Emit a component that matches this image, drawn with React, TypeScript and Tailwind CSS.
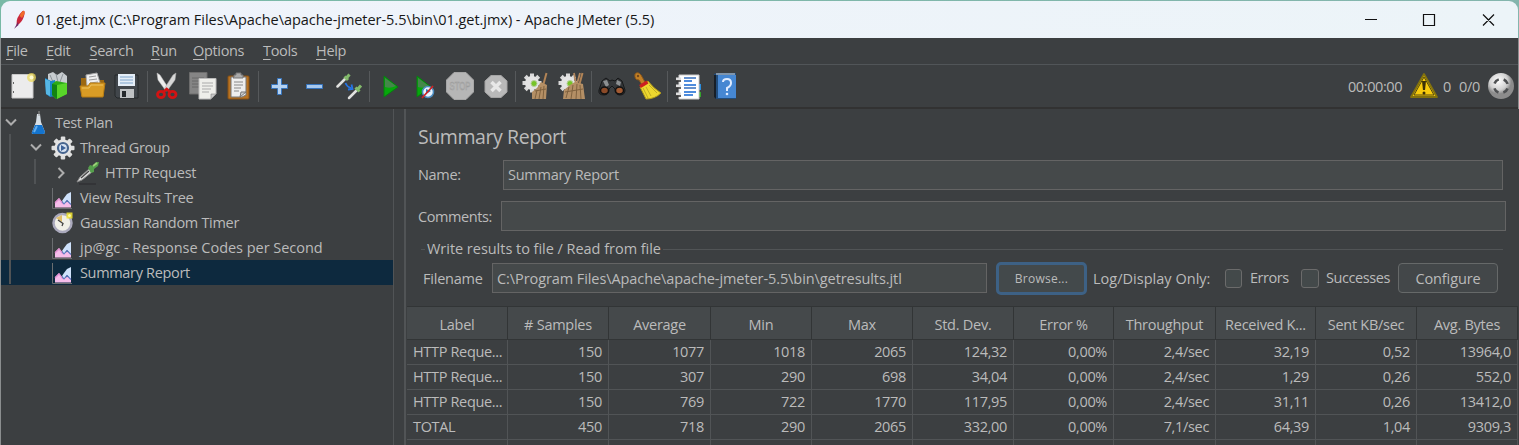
import React from "react";

const Feather = () => (
  <svg className="w-[12px] h-[20px]" viewBox="0 0 12 20">
    <path d="M2.500 15Q2 7 8.500 1Q11 0 10.500 4Q9.500 10 5 14Z" fill="#c9263c" />
    <path d="M5.500 6Q7 2 9 1Q11 0 10.500 4L8 8Z" fill="#f06a2a" />
    <path d="M0 19L4 12L4.500 15L1 18Z" fill="#6b2466" />
  </svg>
);
const Page = () => (
  <svg className="w-[28px] h-[28px]" viewBox="0 0 28 28">
    <path d="M3 2.500H24V26H3Z" fill="#ececec" stroke="#c8c8c8" />
    <path d="M4.500 10v2M4.500 19v2" stroke="#666" />
    <circle cx="22.500" cy="5.500" r="4.500" fill="#eedb5c" opacity=".75" />
    <circle cx="22.500" cy="5.500" r="2" fill="#fffbd0" />
  </svg>
);
const Templates = () => (
  <svg className="w-[28px] h-[28px]" viewBox="0 0 28 28">
    <path d="M5 2L10 0L14 3L19 0L24 4V12H5Z" fill="#c7cccf" />
    <path d="M7 3l3 7M13 2l2 8M20 2l-3 8" stroke="#8d959a" />
    <path d="M2 6L8 9L12 8V24L7 25L3 22Z" fill="#1b86c8" />
    <path d="M2 7L7 9V24L3 22Z" fill="#56b7e5" />
    <path d="M9 12L13 9L24 11V22L13 27L9 23Z" fill="#2cab16" />
    <path d="M14 13L24 11V22L14 27Z" fill="#58d529" />
    <path d="M9 12L14 13V27L9 23Z" fill="#138313" />
  </svg>
);
const Folder = () => (
  <svg className="w-[28px] h-[28px]" viewBox="0 0 28 28">
    <path d="M2 6H8L10 8H25V24H2Z" fill="#9c6811" />
    <path d="M7 3L18 1L22 14H8Z" fill="#efefef" stroke="#aaa" />
    <path d="M10 5l7-1M10 8l8-1M11 11l8-1" stroke="#999" />
    <path d="M1 14H9L11 11H26L24 25H3Z" fill="#d99c25" stroke="#b87d14" />
    <path d="M3 16H10L12 13H24" fill="none" stroke="#edc361" />
  </svg>
);
const Disk = () => (
  <svg className="w-[28px] h-[28px]" viewBox="0 0 28 28">
    <path d="M2 3H25V26H4L2 24Z" fill="#41464b" stroke="#24282b" />
    <path d="M5 2H22V14H5Z" fill="#e4edf6" />
    <path d="M7 5H20M7 8H20M7 11H20" stroke="#7fa5cc" />
    <path d="M7 17H21V26H7Z" fill="#bfc2c4" />
    <path d="M9 19H13V25H9Z" fill="#25292c" />
  </svg>
);
const Scissors = () => (
  <svg className="w-[28px] h-[28px]" viewBox="0 0 28 28">
    <path d="M4 1L7 3L16 17L13 19L5 8Z" fill="#ededed" stroke="#bbb" strokeWidth=".5" />
    <path d="M23 1L20 3L11 17L14 19L22 8Z" fill="#d7d7d7" stroke="#aaa" strokeWidth=".5" />
    <ellipse cx="8" cy="22.500" rx="3.500" ry="3.200" fill="none" stroke="#d31313" strokeWidth="2.800" />
    <ellipse cx="19.500" cy="22.500" rx="3.500" ry="3.200" fill="none" stroke="#d31313" strokeWidth="2.800" />
    <path d="M10.500 20L13.700 17L17 20" fill="none" stroke="#d31313" strokeWidth="2.500" />
  </svg>
);
const Copy = () => (
  <svg className="w-[28px] h-[28px]" viewBox="0 0 28 28">
    <path d="M0.500 .5H18V22H.5Z" fill="#858585" stroke="#6c6c6c" />
    <path d="M3 6H15M3 9H12M3 12H10M3 15H10" stroke="#696969" />
    <path d="M10 6.500H27V22L22 27H10Z" fill="#eeeeea" stroke="#bbb" />
    <path d="M13 11H24M13 14H24M13 17H22M13 20H20" stroke="#aaa" />
    <path d="M22 27V22H27Z" fill="#c7c7c7" stroke="#888" strokeWidth=".6" />
  </svg>
);
const Paste = () => (
  <svg className="w-[28px] h-[28px]" viewBox="0 0 28 28">
    <rect x="4" y="4" width="21" height="23" rx="1" fill="#b87322" stroke="#865015" />
    <path d="M7 5H22V23L18 25H7Z" fill="#eee" stroke="#777" />
    <path d="M10 5V3H12V1H17V3H19V6H9Z" fill="#aaa" stroke="#777" />
    <path d="M10 10H19M10 13H19M10 16H17M10 19H15" stroke="#888" />
    <path d="M16 25L17 20L22 20Z" fill="#ccc" stroke="#777" />
  </svg>
);
const Plus = () => (
  <svg className="w-[28px] h-[28px]" viewBox="0 0 28 28">
    <path d="M12.500 6.500H16.500V12.500H22.500V16.500H16.500V22.500H12.500V16.500H6.500V12.500H12.500Z" fill="#b5d2f2" stroke="#3674bd" />
  </svg>
);
const Minus = () => (
  <svg className="w-[28px] h-[28px]" viewBox="0 0 28 28">
    <path d="M6.500 12.500H22.500V16.500H6.500Z" fill="#a7c8ed" stroke="#3674bd" />
  </svg>
);
const Toggle = () => (
  <svg className="w-[28px] h-[28px]" viewBox="0 0 28 28">
    <path d="M1.500 14.500L9 7" stroke="#e1e1df" strokeWidth="2.500" strokeLinecap="round" />
    <path d="M8.500 4.500L12 8M10 6.500L13.500 2.500" stroke="#83ba6b" strokeWidth="3" />
    <path d="M13 26L20.500 18.500" stroke="#e1e1df" strokeWidth="2.500" strokeLinecap="round" />
    <path d="M19.500 15.500L23.500 19.500M21.500 17.500L25 13.500" stroke="#83ba6b" strokeWidth="3" />
    <path d="M9.500 11Q11 15 15 16M12 17.500L16.500 17L15.500 12.500" fill="none" stroke="#2574e5" strokeWidth="1.800" />
  </svg>
);
const Play = ({ blocked = false }: { blocked?: boolean }) => (
  <svg className="w-[28px] h-[28px]" viewBox="0 0 28 28">
    <path d="M6 4V25L20 15Z" fill="#06a80b" stroke="#087c12" />
    <path d="M7 6L18 14Q12 17 7 15Z" fill="#44874a" />
    {blocked && (
      <>
        <circle cx="17" cy="20" r="5.500" fill="#e9f4ff" stroke="#4b8bbf" strokeWidth="1.500" />
        <path d="M15 17V22L20 19Z" fill="#327fb9" />
        <path d="M11 26L22 14" stroke="#cf2424" strokeWidth="1.800" />
      </>
    )}
  </svg>
);
const Stop = () => (
  <svg className="w-[28px] h-[28px]" viewBox="0 0 28 28">
    <path d="M8 .5H20L27.500 8V20L20 27.500H8L.5 20V8Z" fill="#b6b6b6" stroke="#a6a6a6" />
    <text className="tracking-normal" x="3.500" y="18" textLength="21" lengthAdjust="spacingAndGlyphs" fontSize="11.500" fontFamily="Liberation Sans" fill="#c0c0c0" stroke="#9c9c9c" strokeWidth=".6">STOP</text>
  </svg>
);
const Shutdown = () => (
  <svg className="w-[28px] h-[28px]" viewBox="0 0 28 28">
    <path d="M9 3.500H19L25 9V20L19 25.500H9L3 20V9Z" fill="#b9b9b9" stroke="#a4a4a4" />
    <path d="M9.500 10L18.500 19M18.500 10L9.500 19" stroke="#e8e8e8" strokeWidth="3.500" />
  </svg>
);
const gearTeeth = [0, 45, 90, 135, 180, 225, 270, 315];
const Sweep = ({ all = false }: { all?: boolean }) => (
  <svg className="w-[28px] h-[28px]" viewBox="0 0 28 28">
    {gearTeeth.map((a) => <rect key={a} x="8" y="1.500" width="4" height="5" fill="#dadada" transform={`rotate(${a} 10 11)`} />)}
    <circle cx="10" cy="11" r="7" fill="#e4e4e4" />
    <circle cx="12" cy="11.500" r="3" fill="#77c428" stroke="#b7cf9c" />
    <path d="M21.500 12L24.500 1" stroke="#b28456" strokeWidth="2" />
    {all ? (
      <>
        <path d="M16 1L18 12M22 1L19 12" stroke="#b3885f" strokeWidth="1.800" />
        <path d="M6 18L12 13L17 10L25 12L27 27L5 27Z" fill="#b48f65" />
        <path d="M11 15L8 26M15 13L13 27M19 12L18 27M22 13L23 27M7 20L25 17" stroke="#80623f" />
      </>
    ) : (
      <>
        <path d="M10 20L15 16L19 10L25 13L24 27L10 27Z" fill="#b48f65" />
        <path d="M15 18L13 27M19 15L17 27M22 14L21 27M13 19L24 17" stroke="#80623f" />
      </>
    )}
  </svg>
);
const Binoculars = () => (
  <svg className="w-[28px] h-[28px]" viewBox="0 0 28 28">
    <path d="M4 9L8 6L12 9L14 8L17 9L20 6L24 9L27 18Q27 23 22 23Q17 23 17 17L14 14L11 17Q11 23 6 23Q0 23 1 18Z" fill="#343638" stroke="#171819" />
    <path d="M5 9L9 8L11 13L8 15ZM19 8L23 10L22 14L18 12Z" fill="#8d9092" />
    <ellipse cx="6.500" cy="18.500" rx="4" ry="3.500" fill="#8b4a28" stroke="#111" strokeWidth="1.500" />
    <ellipse cx="21.500" cy="18.500" rx="4" ry="3.500" fill="#a35a32" stroke="#111" strokeWidth="1.500" />
  </svg>
);
const Broom = () => (
  <svg className="w-[28px] h-[28px]" viewBox="0 0 28 28">
    <path d="M2 2Q5-1 8 3L12 10L9 13L6 8Q1 8 2 2Z" fill="#c18027" stroke="#8b561a" />
    <path d="M7 15L15 9Q20 16 28 21Q22 27 13 27Q11 23 7 15Z" fill="#eed82e" stroke="#ae981b" />
    <path d="M13 15L18 24M10 16L15 26M16 13L24 21" stroke="#b3a021" strokeWidth=".8" />
    <path d="M7 14.500L14.500 10" stroke="#cc2020" strokeWidth="3.500" />
    <circle cx="5" cy="4" r="1.200" fill="#734719" />
  </svg>
);
const Notebook = () => (
  <svg className="w-[28px] h-[28px]" viewBox="0 0 28 28">
    <path d="M24 12H26V18H24Z" fill="#2b8ddd" /><path d="M24 20H26V25H24Z" fill="#34a52b" />
    <path d="M4 3H24V27H4Z" fill="#fff" stroke="#ccc" />
    <path d="M9 6H21M9 16H21" stroke="#346ebc" strokeWidth="1.300" />
    <path d="M9 9H17M9 13H21M9 20H21M9 23H18" stroke="#1567d2" strokeWidth="1.400" />
    <path d="M1 7H6M1 14H6M1 22H6" stroke="#ddd" strokeWidth="3" />
    <path d="M1 9H6M1 16H6M1 24H6" stroke="#333" strokeWidth="1.300" />
  </svg>
);
const Book = () => (
  <svg className="w-[28px] h-[28px]" viewBox="0 0 28 28">
    <path d="M3 2L7 1H25V27H5L3 25Z" fill="#214c7b" />
    <path d="M7 3H25V26H7Z" fill="#4687d2" /><path d="M5 2H24" stroke="#dedede" />
    <path d="M3 3V25L5 27V3Z" fill="#171f28" />
    <path d="M12 10Q12 7 16 7Q20 7 20 11Q20 14 16 16V19" fill="none" stroke="#dfebff" strokeWidth="2" /><circle cx="16" cy="22" r="1.300" fill="#dfebff" />
  </svg>
);
const Warning = () => (
  <svg className="w-[28px] h-[26px]" viewBox="0 0 28 26">
    <path d="M14 1L27 24H1Z" fill="#f7cb0c" stroke="#83720c" strokeWidth="1.800" strokeLinejoin="round" />
    <path d="M14 4L24 22H4Z" fill="none" stroke="#504712" />
    <path d="M12 8H16L15 17H13Z" fill="#3b3107" /><circle cx="14" cy="20" r="1.500" fill="#3b3107" />
  </svg>
);
const Status = () => (
  <svg className="w-[28px] h-[28px]" viewBox="0 0 28 28">
    <defs><radialGradient id="silver" cx=".4" cy=".3"><stop stopColor="#fff" /><stop offset=".7" stopColor="#d0d0d0" /><stop offset="1" stopColor="#8c8c8c" /></radialGradient></defs>
    <circle cx="14" cy="14" r="13" fill="url(#silver)" />
    <circle cx="14" cy="14" r="7" fill="none" stroke="#4e5052" strokeWidth="2.600" strokeDasharray="6 5" strokeDashoffset="-2.500" />
  </svg>
);

const Flask = () => (
  <svg className="w-[24px] h-[24px]" viewBox="0 0 24 24">
    <path d="M11 3H14L15 11L19 21Q19 23 16 23H8Q5 23 6 21L10 11Z" fill="#d7dfe6" />
    <path d="M9 14H16L19 21Q19 23 16 23H8Q5 23 6 21Z" fill="#1474ce" />
    <path d="M11 15L8 21" stroke="#63aeed" strokeWidth="2" /><path d="M13 0V5" stroke="#999" />
  </svg>
);
const Gear = () => (
  <svg className="w-[24px] h-[24px]" viewBox="0 0 24 24">
    {gearTeeth.map((a) => <rect key={a} x="9.800" y=".5" width="4.500" height="6" rx="1" fill="#dedfdf" transform={`rotate(${a} 12 12)`} />)}
    <circle cx="12" cy="12" r="8.500" fill="#e4e4e4" />
    <circle cx="12" cy="12" r="5" fill="#d6e2f1" stroke="#47658f" strokeWidth="2.200" />
    <path d="M10 9L15 12L10 15Z" fill="#3c6198" />
  </svg>
);
const Dropper = () => (
  <svg className="w-[24px] h-[24px]" viewBox="0 0 24 24">
    <path d="M3 23H20" stroke="#303234" strokeWidth="1.500" />
    <path d="M1 21L4 16L13 8L16 11L6 19Z" fill="#ddd" stroke="#888" />
    <path d="M5 17L13 10" stroke="#444" strokeWidth="1.200" />
    <path d="M12 7L14 4L17 5L20 1L23 1L22 5L18 8L18 11L15 12Z" fill="#559f4c" />
    <path d="M17 5L21 2" stroke="#9bd177" strokeWidth="2" />
  </svg>
);
const Chart = () => (
  <svg className="w-[24px] h-[24px]" viewBox="0 0 24 24">
    <path d="M1.500 2V22.500H21" fill="none" stroke="#6b6e70" />
    <path d="M4 21.500V16L8 12L12 17L20 15V21.500Z" fill="#f6bdea" />
    <path d="M4 17L8 13L12 18" fill="none" stroke="#e48fd2" strokeWidth="1.200" />
    <path d="M11 15L13 12L16 8L20 6V18L16 14L13 18Z" fill="#cfe2fb" /><path d="M11 15.500L13 18L16 14.500L20 18.500" fill="none" stroke="#5a78c0" strokeWidth="1.100" />
  </svg>
);
const Timer = () => (
  <svg className="w-[24px] h-[24px]" viewBox="0 0 24 24">
    <circle cx="11.500" cy="12" r="9" fill="#f0efe7" stroke="#aaa9bc" strokeWidth="2.500" />
    <path d="M5 7L11 4L11 11Z" fill="#e0be6c" /><path d="M7 9L12 12.500L11 15" fill="none" stroke="#444" strokeWidth="1.300" />
    <path d="M15.500 1.500H21.500V7.500H15.500Z" fill="#f4e832" opacity=".85" /><circle cx="18.500" cy="4.500" r="1.500" fill="#fffb9c" />
  </svg>
);
const Chevron = ({ right = false }: { right?: boolean }) => (
  <svg className="w-[12px] h-[12px]" viewBox="0 0 12 12"><path d={right ? "M3.500 1L8.500 6L3.500 11" : "M1 2.500L6 7.500L11 2.500"} fill="none" stroke="#adadad" strokeWidth="2" /></svg>
);

const menus = [
  ["File", "w-[40px]"], ["Edit", "w-[43.500px]"], ["Search", "w-[61.500px]"], ["Run", "w-[42px]"], ["Options", "w-[70px]"], ["Tools", "w-[53px]"], ["Help", "w-[40px]"],
];
const tools: [React.ReactNode, string][] = [
  [<Page />, "ml-[8px]"], [<Templates />, "ml-[6px]"], [<Folder />, "ml-[8px]"], [<Disk />, "ml-[6px]"],
  [null, "ml-[6px]"], [<Scissors />, "ml-[5px]"], [<Copy />, "ml-[8px]"], [<Paste />, "ml-[7px]"],
  [null, "ml-[6px]"], [<Plus />, "ml-[6px]"], [<Minus />, "ml-[7px]"], [<Toggle />, "ml-[8px]"],
  [null, "ml-[5px]"], [<Play />, "ml-[8px]"], [<Play blocked />, "ml-[5px]"], [<Stop />, "ml-[7px]"], [<Shutdown />, "ml-[8px]"],
  [null, "ml-[5px]"], [<Sweep />, "ml-[6px]"], [<Sweep all />, "ml-[8px]"],
  [null, "ml-[5px]"], [<Binoculars />, "ml-[6px]"], [<Broom />, "ml-[7px]"],
  [null, "ml-[6px]"], [<Notebook />, "ml-[7px]"], [<Book />, "ml-[8px]"],
];
const tree: [string, React.ReactNode, string, string, string][] = [
  ["Test Plan", <Flask />, "pl-[4px]", "down", "tracking-[-0.400px]"],
  ["Thread Group", <Gear />, "pl-[29px]", "down", "tracking-[-0.400px]"],
  ["HTTP Request", <Dropper />, "pl-[54px]", "right", "tracking-[-0.250px]"],
  ["View Results Tree", <Chart />, "pl-[29px]", "", "tracking-[-0.270px]"],
  ["Gaussian Random Timer", <Timer />, "pl-[29px]", "", "tracking-[-0.310px]"],
  ["jp@gc - Response Codes per Second", <Chart />, "pl-[29px]", "", "tracking-[-0.030px]"],
  ["Summary Report", <Chart />, "pl-[29px]", "", "tracking-[-0.330px]"],
];
const headers = ["Label", "# Samples", "Average", "Min", "Max", "Std. Dev.", "Error %", "Throughput", "Received K...", "Sent KB/sec", "Avg. Bytes"];
const rows = [
  ["HTTP Reque...", "150", "1077", "1018", "2065", "124,32", "0,00%", "2,4/sec", "32,19", "0,52", "13964,0"],
  ["HTTP Reque...", "150", "307", "290", "698", "34,04", "0,00%", "2,4/sec", "1,29", "0,26", "552,0"],
  ["HTTP Reque...", "150", "769", "722", "1770", "117,95", "0,00%", "2,4/sec", "31,11", "0,26", "13412,0"],
  ["TOTAL", "450", "718", "290", "2065", "332,00", "0,00%", "7,1/sec", "64,39", "1,04", "9309,3"],
];
const cols = "grid grid-cols-[101px_101px_102px_101px_101px_101px_100px_102px_100px_101px_101px]";

export default function App() {
  return (
    <div className="flex h-[445px] w-[1519px] flex-col overflow-hidden bg-[#8b8e8f] pr-px pl-px font-['Open_Sans',sans-serif] text-[14.500px] leading-[20px] tracking-[-0.330px] whitespace-nowrap text-[#bbbbbb]">
      <div className="-mx-px h-[38px] shrink-0 bg-linear-to-r from-[#78b9a6] to-[#84b5ad] px-px pt-px">
        <header className="flex h-[37px] items-center rounded-t-[9px] bg-linear-to-r from-[#eff3fb] to-[#ecf4f8] pl-[13px] text-[14.500px] tracking-[-0.040px] text-[#171717]">
          <Feather /><span className="ml-[10px]">01.get.jmx (C:\Program Files\Apache\apache-jmeter-5.5\bin\01.get.jmx) - Apache JMeter (5.5)</span>
          <svg className="ml-auto h-[14px] w-[130px] mr-[23px]" viewBox="0 0 130 14"><path d="M0 6.500H12M58.500 1.500H69.500V12.500H58.500ZM118 1.500L129 12.500M129 1.500L118 12.500" fill="none" stroke="#111" strokeWidth="1.200" /></svg>
        </header>
      </div>
      <nav className="flex h-[27px] shrink-0 items-center border-b border-[#515558] bg-[#3c3f41] pl-[5px]">
        {menus.map(([m, w]) => <span key={m} className={w}><span className="underline underline-offset-[3px]">{m[0]}</span>{m.slice(1)}</span>)}
      </nav>
      <div className="flex h-[44px] shrink-0 items-center border-b-2 border-[#323232] bg-[#3c3f41]">
        {tools.map(([icon, gap], i) => icon ? <span key={i} className={`shrink-0 ${gap}`}>{icon}</span> : <span key={i} className={`h-[31px] w-px shrink-0 bg-[#56595b] ${gap}`} />)}
        <div className="ml-auto flex items-center pr-[3px]"><span className="pt-[2px] tracking-[-0.400px]">00:00:00</span><span className="ml-[8px]"><Warning /></span><span className="ml-[5px] pt-[2px]">0</span><span className="ml-[8px] pt-[2px]">0/0</span><span className="ml-[7px]"><Status /></span></div>
      </div>
      <main className="-mr-px flex min-h-0 flex-1 bg-[#3c3f41]">
        <aside className="relative w-[393px] shrink-0 border-r border-[#515456] pt-px">
          {tree.map(([name, icon, pad, arrow, track], i) => (
            <div key={i} className={`flex h-[25px] items-center ${pad} ${i === 6 ? "bg-[#0d293e]" : ""}`}>
              <span className="w-[12px]">{arrow && <Chevron right={arrow === "right"} />}</span>
              <span className="ml-[9px] shrink-0">{icon}</span><span className={`ml-[5px] ${track}`}>{name}</span>
            </div>
          ))}
          <div className="absolute top-[25px] left-[8px] h-[150px] w-[2px] bg-[#505355]" />
          <div className="absolute top-[50px] left-[33px] h-[25px] w-[2px] bg-[#505355]" />
        </aside>
        <div className="w-[12px] shrink-0 border-r-2 border-[#515456]" />
        <section className="mr-px flex min-w-0 flex-1 flex-col">
          <h1 className="mt-[13px] ml-[12px] h-[30px] text-[19.500px] leading-[30px] tracking-[-0.420px]">Summary Report</h1>
          <div className="mt-[8px] mr-[15px] ml-[12px] flex h-[30px] items-center"><label className="w-[85px]">Name:</label><div className="flex h-[30px] flex-1 items-center border border-[#646464] bg-[#45494a] pl-[4px] tracking-[-0.260px]">Summary Report</div></div>
          <div className="mt-[11px] mr-[12px] ml-[12px] flex h-[30px] items-center"><label className="w-[83px] pt-[2px] tracking-[-0.420px]">Comments:</label><div className="h-[30px] flex-1 border border-[#646464] bg-[#45494a]" /></div>
          <div className="mt-[8px] mr-[15px] ml-[15px] flex h-[20px] items-center"><span className="h-px w-[4px] bg-[#515456]" /><span className="mx-[2px] tracking-[-0.030px]">Write results to file / Read from file</span><span className="h-px flex-1 bg-[#515456]" /></div>
          <div className="mt-[2px] ml-[17px] flex h-[34px] items-center">
            <span className="w-[69px] pt-[1px] tracking-[-0.220px]">Filename</span><div className="flex h-[30px] w-[495px] items-center border border-[#646464] bg-[#45494a] pt-[1px] pl-[4px] tracking-[-0.080px]">C:\Program Files\Apache\apache-jmeter-5.5\bin\getresults.jtl</div>
            <button className="ml-[9px] h-[33px] w-[91px] rounded-[5px] border-[3px] border-[#3d6185] bg-[#43494b] pt-[2px] text-[12px] tracking-[.25px]">Browse...</button>
            <span className="ml-[6px] w-[132px] pt-[1px] tracking-[0.020px]">Log/Display Only:</span><span className="h-[19px] w-[17px] rounded-[3px] border border-[#6b6b6b] bg-[#43494a]" /><span className="ml-[8px] w-[51px] tracking-[-0.450px]">Errors</span><span className="h-[19px] w-[18px] rounded-[3px] border border-[#6b6b6b] bg-[#43494a]" /><span className="ml-[7px] w-[72px] tracking-[-0.420px]">Successes</span><button className="h-[30px] w-[100px] rounded-[4px] border border-[#666969] bg-[#434749] pt-[1px] tracking-[-0.100px]">Configure</button>
          </div>
          <div className="mt-[11px] h-[139px] overflow-hidden pl-px">
            <div className={`${cols} h-[34px] border-y border-[#323536] bg-[#45494b]`}>{headers.map((h) => <div key={h} className="flex items-center justify-center border-r border-[#323536] pt-[3px] tracking-[-0.260px]">{h}</div>)}</div>
            {[...rows, Array(11).fill("")].map((row, ri) => <div key={ri} className={`${cols} h-[25px] border-b border-[#515456]`}>{row.map((v: string, i: number) => <div key={i} className={`flex items-center border-r border-[#515456] ${i === 0 ? "pl-[6px]" : "justify-end pr-[6px]"}`}>{v}</div>)}</div>)}
          </div>
        </section>
      </main>
    </div>
  );
}
